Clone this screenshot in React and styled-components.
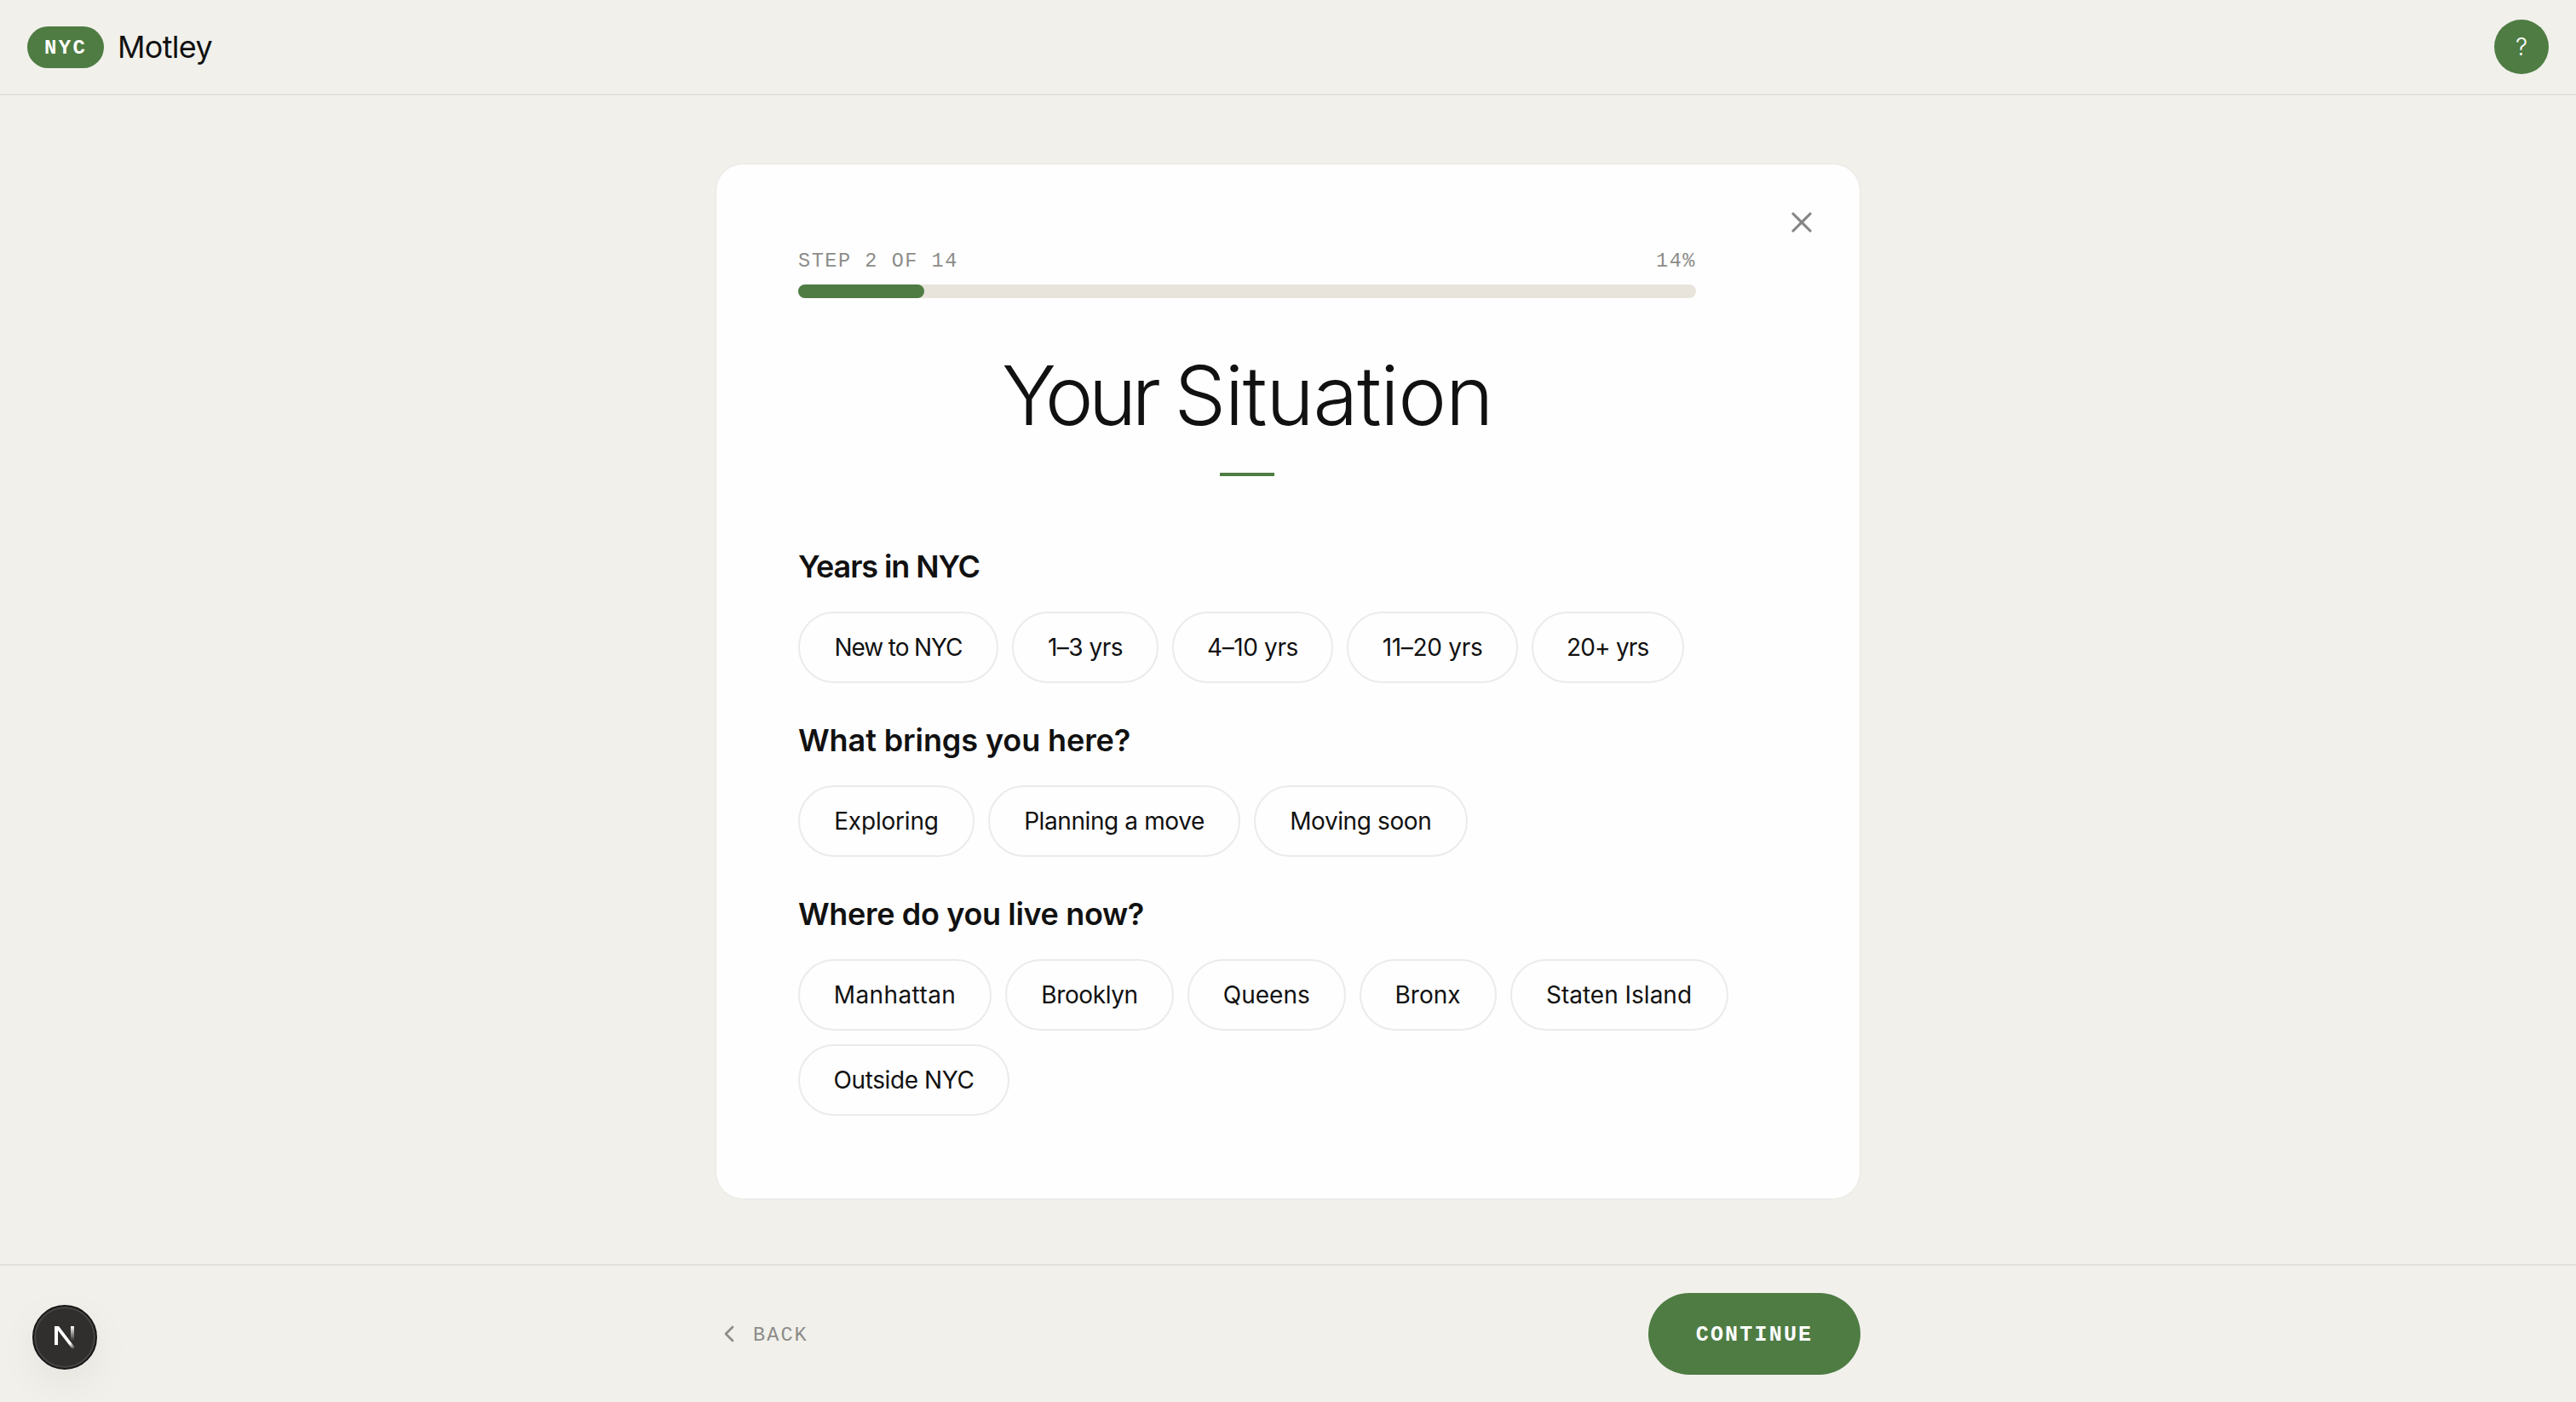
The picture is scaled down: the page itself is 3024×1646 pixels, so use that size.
import React from 'react';
import styled, {createGlobalStyle} from 'styled-components';
import {ChevronLeft, X} from 'lucide-react';

const GlobalStyle = createGlobalStyle`
  * {
    box-sizing: border-box;
  }

  body {
    margin: 0;
    background: #f1f0eb;
    color: #111;
    font-family: Inter, 'Liberation Sans', sans-serif;
  }

  button {
    border: 0;
    padding: 0;
    background: none;
    color: inherit;
    font: inherit;
    cursor: pointer;
  }
`

const Page = styled.div`
  height: 1646px;
  display: flex;
  flex-direction: column;
  overflow: hidden;
`

const Header = styled.header`
  height: 112px;
  flex: none;
  display: flex;
  align-items: center;
  justify-content: space-between;
  padding: 0 32px;
  border-bottom: 2px solid #e2e1dc;
`

const Brand = styled.div`
  display: flex;
  align-items: center;
  gap: 16px;
`

const Mono = styled.span`
  font-family: 'Liberation Mono', monospace;
  font-size: 23.5px;
  line-height: 32px;
  letter-spacing: 1.56px;
  color: #8c8c89;
  white-space: pre;
`

const CityBadge = styled(Mono)`
  width: 90px;
  height: 49px;
  line-height: 52px;
  padding-left: 20px;
  border-radius: 25px;
  background: #4e7c43;
  color: #fff;
  font-size: 24px;
  font-weight: 700;
  letter-spacing: 2.4px;
`

const BrandName = styled.span`
  font-size: 36px;
  line-height: 48px;
  letter-spacing: -0.7px;
`

const HelpButton = styled.button`
  && {
    width: 64px;
    height: 64px;
    border-radius: 50%;
    background: #4e7c43;
    color: #fff;
    font-size: 28px;
    font-weight: 300;
  }
`

const Main = styled.main`
  flex: 1;
  display: flex;
  justify-content: center;
  align-items: flex-start;
  padding-top: 80px;
`

const Card = styled.section`
  width: 1344px;
  height: 1216px;
  display: flex;
  flex-direction: column;
  padding: 48px 48px 0 96px;
  border: 1px solid #e8e7e3;
  border-radius: 32px;
  background: #fefefe;
`

const CloseButton = styled.button`
  width: 40px;
  height: 40px;
  align-self: flex-end;
  display: flex;
  color: #858585;
`

const Progress = styled.div`
  width: 1054px;
  margin-top: 10px;
`

const ProgressLabels = styled.div`
  display: flex;
  justify-content: space-between;
`

const Track = styled.div`
  height: 16px;
  margin-top: 11px;
  border-radius: 8px;
  background: #e8e4dc;
`

const Fill = styled.div`
  height: 16px;
  border-radius: 8px;
  background: #4e7c43;
`

const Title = styled.h1`
  width: 1054px;
  margin: 56px 0 0;
  font-size: 96px;
  font-weight: 300;
  line-height: 116px;
  text-align: center;
`

const Word = styled.span`
  letter-spacing: ${p => p.$spacing}px;
`

const Accent = styled.div`
  width: 64px;
  height: 4px;
  margin: 33px 0 85px 495px;
  background: #4e7c43;
`

const Question = styled.div`
  margin-bottom: 46px;
`

const Prompt = styled.h2`
  margin: 0 0 31px;
  font-size: 36px;
  font-weight: 600;
  line-height: 43px;
  letter-spacing: ${p => p.$spacing}px;
`

const Options = styled.div`
  display: flex;
  flex-wrap: wrap;
  gap: 16px;
`

const Chip = styled.button`
  && {
    width: ${p => p.$width}px;
    height: 84px;
    border: 2px solid #ebebeb;
    border-radius: 42px;
    font-size: 28px;
    letter-spacing: ${p => p.$spacing}px;
    white-space: nowrap;
  }
`

const Footer = styled.footer`
  height: 162px;
  flex: none;
  display: flex;
  justify-content: center;
  border-top: 2px solid #e2e1dc;
`

const FooterInner = styled.div`
  width: 1344px;
  height: 160px;
  display: flex;
  align-items: center;
  justify-content: space-between;
`

const BackButton = styled.button`
  display: flex;
  align-items: center;
  gap: 12px;
  color: #8c8c89;
`

const BackLabel = styled(Mono)`
  padding-top: 3px;
  letter-spacing: 2.1px;
`

const ContinueButton = styled.button`
  && {
    width: 249px;
    height: 96px;
    padding-top: 2px;
    border-radius: 48px;
    background: #4e7c43;
    color: #fff;
    font-family: 'Liberation Mono', monospace;
    font-size: 25px;
    font-weight: 700;
    letter-spacing: 2.2px;
  }
`

// floats above the footer
const DevBadge = styled.div`
  position: fixed;
  left: 38px;
  top: 1532px;
  width: 76px;
  height: 76px;
  display: flex;
  align-items: center;
  justify-content: center;
  border: 2px solid #171717;
  border-radius: 50%;
  background: #302f2d;
  box-shadow: inset 0 0 0 2px #474644, 0 16px 48px rgba(0, 0, 0, 0.06);
`

const questions = [
  {
    prompt: 'Years in NYC',
    spacing: -1.1,
    options: [
      ['New to NYC', 235, -1.1],
      ['1–3 yrs', 172, -0.5],
      ['4–10 yrs', 189, -0.4],
      ['11–20 yrs', 201, -0.3],
      ['20+ yrs', 178.5, -0.8],
    ],
  },
  {
    prompt: 'What brings you here?',
    spacing: -0.1,
    options: [
      ['Exploring', 207, -0.2],
      ['Planning a move', 296, -0.4],
      ['Moving soon', 250.5, -0.4],
    ],
  },
  {
    prompt: 'Where do you live now?',
    spacing: -0.35,
    options: [
      ['Manhattan', 227, 0.4],
      ['Brooklyn', 198, -0.4],
      ['Queens', 185.5, 0],
      ['Bronx', 161, 0],
      ['Staten Island', 256, 0],
      ['Outside NYC', 248, -0.4],
    ],
  },
]

const NextLogo = () => (
  <svg width='26' height='28' viewBox='0 0 26 28' fill='none'>
    <defs>
      <linearGradient id='diagonal' x1='14' y1='15' x2='24' y2='28' gradientUnits='userSpaceOnUse'>
        <stop stopColor='#fff'/>
        <stop offset='0.5' stopColor='#fff'/>
        <stop offset='1' stopColor='#fff' stopOpacity='0'/>
      </linearGradient>
      <linearGradient id='stem' x1='0' y1='1' x2='0' y2='18' gradientUnits='userSpaceOnUse'>
        <stop stopColor='#fff'/>
        <stop offset='1' stopColor='#fff' stopOpacity='0'/>
      </linearGradient>
    </defs>
    <path d='M1 1H6L25 26L22 28L5 6V23H1Z' fill='url(#diagonal)'/>
    <path d='M20 1H24V18H20Z' fill='url(#stem)'/>
  </svg>
)

const App = () => {
  const percent = 14

  return (
    <Page>
      <GlobalStyle/>
      <Header>
        <Brand>
          <CityBadge>NYC</CityBadge>
          <BrandName>Motley</BrandName>
        </Brand>
        <HelpButton>?</HelpButton>
      </Header>
      <Main>
        <Card>
          <CloseButton aria-label='Close'><X size={40} strokeWidth={1.9}/></CloseButton>
          <Progress>
            <ProgressLabels>
              <Mono>STEP 2 OF 14</Mono>
              <Mono>{percent}%</Mono>
            </ProgressLabels>
            <Track>
              <Fill style={{width: `${percent}%`}}/>
            </Track>
          </Progress>
          <Title>
            <Word $spacing={-5.8}>Your </Word>
            <Word $spacing={-1.3}>Situation</Word>
          </Title>
          <Accent/>
          {questions.map(({prompt, spacing, options}) => (
            <Question key={prompt}>
              <Prompt $spacing={spacing}>{prompt}</Prompt>
              <Options>
                {options.map(([label, width, tracking]) => (
                  <Chip key={label} $width={width} $spacing={tracking}>{label}</Chip>
                ))}
              </Options>
            </Question>
          ))}
        </Card>
      </Main>
      <Footer>
        <FooterInner>
          <BackButton>
            <ChevronLeft size={32} strokeWidth={2}/>
            <BackLabel>BACK</BackLabel>
          </BackButton>
          <ContinueButton>CONTINUE</ContinueButton>
        </FooterInner>
      </Footer>
      <DevBadge><NextLogo/></DevBadge>
    </Page>
  )
}

export default App
